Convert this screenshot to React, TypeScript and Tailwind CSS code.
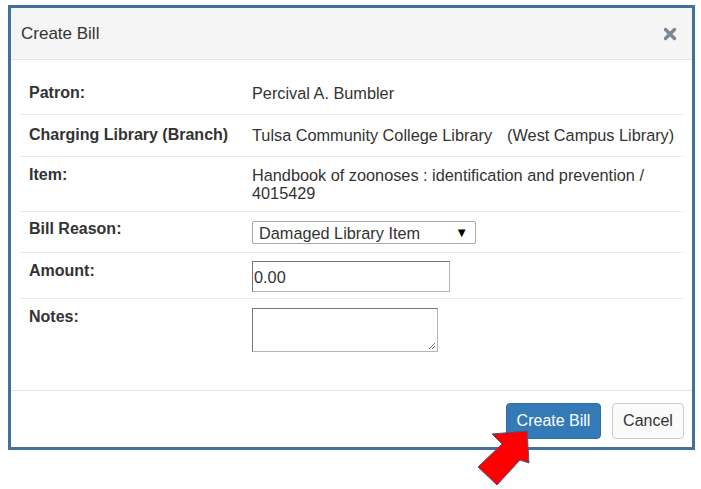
import React from 'react';

const font = { fontFamily: '"Liberation Sans", Arial, sans-serif' };

const CloseIcon = () => (
  <svg width="14" height="14" viewBox="0 0 14 14">
    <path d="M2.5 2.5 L11.5 11.5 M11.5 2.5 L2.5 11.5" stroke="#7a8899" strokeWidth={3.4} strokeLinecap="round" />
  </svg>
);

const Label: React.FC<{ children: React.ReactNode }> = ({ children }) => (
  <div className="w-[232px] shrink-0 pl-[9px] font-bold text-[16px] leading-[18px]">{children}</div>
);

export default function App() {
  return (
    <div className="relative w-[701px] h-[489px] bg-white text-[16.3px] text-[#333]" style={font}>
      <div className="pt-[5px] pl-[8px]">
        <div className="w-[687px] h-[445px] border-[3px] border-[#41719c] flex flex-col">
          {/* header */}
          <div className="h-[52px] shrink-0 bg-[#f5f5f5] border-b border-[#e5e5e5] flex items-center justify-between pl-[10px] pr-[15px]">
            <span className="text-[17px] leading-[20px] text-[#333]">Create Bill</span>
            <CloseIcon />
          </div>

          {/* body */}
          <div className="h-[330px] shrink-0 pt-[12px] px-[9px]">
            <div className="flex pt-[12px] pb-[12px] border-b border-[#eaeaea]">
              <Label>Patron:</Label>
              <div className="leading-[18px]">Percival A. Bumbler</div>
            </div>
            <div className="flex pt-[11px] pb-[12px] border-b border-[#eaeaea]">
              <Label>Charging Library (Branch)</Label>
              <div className="leading-[18px] flex">
                <span>Tulsa Community College Library</span>
                <span className="ml-[15px]">(West Campus Library)</span>
              </div>
            </div>
            <div className="flex pt-[9px] pb-[9px] border-b border-[#eaeaea]">
              <Label>Item:</Label>
              <div className="leading-[18px]">
                Handbook of zoonoses : identification and prevention /<br />4015429
              </div>
            </div>
            <div className="flex pt-[8px] pb-[8px] border-b border-[#eaeaea]">
              <Label>Bill Reason:</Label>
              <div className="mt-[1px] w-[224px] h-[23px] border border-[#a9a9a9] rounded-[2px] flex items-center justify-between pl-[6px] pr-[7px] leading-[18px]">
                <span>Damaged Library Item</span>
                <span className="text-[13px] text-black">▼</span>
              </div>
            </div>
            <div className="flex pt-[9px] pb-[6px] border-b border-[#eaeaea]">
              <Label>Amount:</Label>
              <div className="-mt-[1px] w-[198px] h-[31px] border border-t-[#767676] border-l-[#767676] border-r-[#b5b5b5] border-b-[#b5b5b5] flex items-center pl-[1px] leading-[18px]">
                0.00
              </div>
            </div>
            <div className="flex pt-[9px]">
              <Label>Notes:</Label>
              <div className="relative w-[186px] h-[44px] border border-t-[#767676] border-l-[#767676] border-r-[#b5b5b5] border-b-[#b5b5b5]">
                <svg className="absolute right-[1px] bottom-[1px]" width="9" height="9" viewBox="0 0 9 9">
                  <path d="M8 2 L2 8 M8 5 L5 8" stroke="#777" strokeWidth={1} />
                </svg>
              </div>
            </div>
          </div>

          {/* footer */}
          <div className="flex-1 border-t border-[#e5e5e5] flex justify-end items-start pt-[12px] pr-[8px] gap-[11px]">
            <button className="w-[95px] h-[36px] rounded-[4px] bg-[#337ab7] border border-[#2e6da4] text-white text-[16px] leading-[18px]">
              Create Bill
            </button>
            <button className="w-[72px] h-[36px] rounded-[4px] bg-[#fafafa] border border-[#ccc] text-[#333] text-[16px] leading-[18px]">
              Cancel
            </button>
          </div>
        </div>
      </div>

      {/* red pointer arrow annotation */}
      <svg className="absolute left-0 top-0 pointer-events-none" width="701" height="489" viewBox="0 0 701 489">
        <polygon
          points="527,431 492,434 502,444 478,467 497,485 520,460 529,463"
          fill="#ff0000"
          stroke="#3f5f80"
          strokeWidth={1}
          strokeLinejoin="miter"
        />
      </svg>
    </div>
  );
}
